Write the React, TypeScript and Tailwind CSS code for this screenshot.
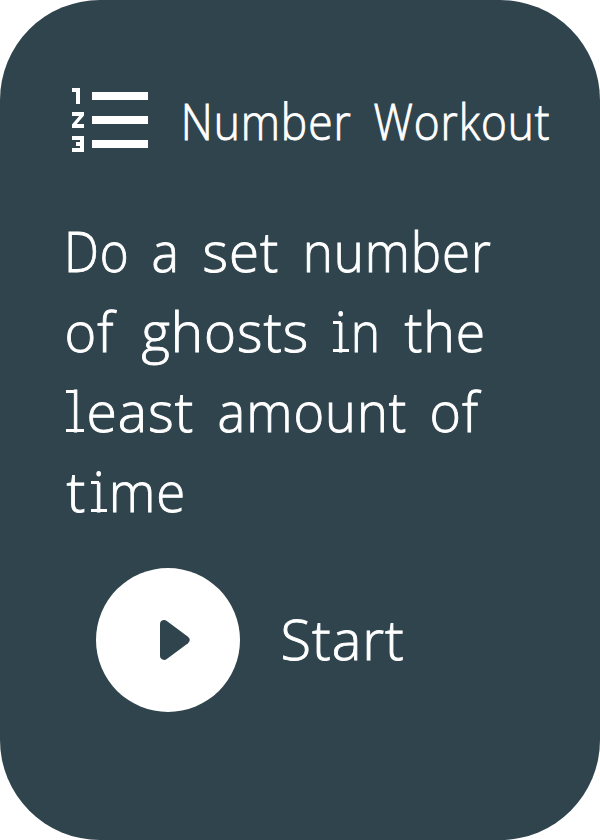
import { useLayoutEffect, useRef, useState } from "react";
import type { ReactNode } from "react";

type SegmentProps = {
  text: string;
  gap?: number;
  width: number;
  size?: number;
  children?: ReactNode;
};

const STROKE = 0.9;

// A run of letters whose ink is fitted to an exact width.
function Segment({ text, gap = 0, width, size = 56, children }: SegmentProps) {
  const ref = useRef<HTMLSpanElement>(null);
  const [transform, setTransform] = useState("none");

  useLayoutEffect(() => {
    const ctx = document.createElement("canvas").getContext("2d");
    if (!ctx || !ref.current) return;
    const style = getComputedStyle(ref.current);
    ctx.font = `${style.fontWeight} ${size}px "Open Sans"`;
    ctx.letterSpacing = style.letterSpacing;
    const m = ctx.measureText(text);
    const left = m.actualBoundingBoxLeft + STROKE / 2;
    const right = m.actualBoundingBoxRight + STROKE / 2;
    const scale = width / (left + right);
    setTransform(`translate(${left * scale}px, -2px) scaleX(${scale})`);
  }, [text, width, size]);

  return (
    <span className="relative block shrink-0 whitespace-pre" style={{ width, marginLeft: gap }}>
      <span
        ref={ref}
        className="block w-max origin-left tracking-[1px] [-webkit-text-stroke:0.9px_white]"
        style={{ transform, fontSize: size }}
      >
        {text}
      </span>
      {children}
    </span>
  );
}

function LetterI({ gap }: { gap: number }) {
  return (
    <Segment text="i" gap={gap} width={5.5}>
      <span className="absolute -left-[5.5px] top-[29px] h-[3px] w-[8px] bg-white" />
      <span className="absolute -left-[5.5px] top-[57px] h-[3px] w-[16.5px] bg-white" />
    </Segment>
  );
}

function LetterL({ gap }: { gap: number }) {
  return (
    <Segment text="l" gap={gap} width={4.5}>
      <span className="absolute -left-[6.5px] top-[17.5px] h-[3px] w-[8px] bg-white" />
      <span className="absolute -left-[6.5px] top-[57px] h-[3px] w-[18px] bg-white" />
    </Segment>
  );
}

export default function App() {
  return (
    <main className="h-[840px] w-[600px] overflow-hidden rounded-[100px] bg-[#30444d] pt-[72px] font-['Open_Sans',sans-serif] font-light text-white">
      <header className="flex h-24 items-start pl-16">
        <svg viewBox="0 0 24 24" className="size-24 shrink-0" fill="currentColor">
          <path d="M2 17h2v.5H3v1h1v.5H2v1h3v-4H2v1zm1-9h1V4H2v1h1v3zm-1 3h1.8L2 13.1v.9h3v-1H3.2L5 10.9V10H2v1zm5-6v2h14V5H7zm0 14h14v-2H7v2zm0-6h14v-2H7v2z" />
        </svg>
        <h1 className="mt-[11px] flex leading-[80px]">
          <Segment text="Number" gap={23.5} width={167} size={49} />
          <Segment text="Workout" gap={23.5} width={175.5} size={49} />
        </h1>
      </header>
      <section className="mt-[44px] leading-[80px]">
        <div className="flex h-20">
          <Segment text="Do" gap={68} width={58.5} />
          <Segment text="a" gap={26.5} width={23} />
          <Segment text="set" gap={28} width={74} />
          <Segment text="number" gap={27.5} width={184.5} />
        </div>
        <div className="flex h-20">
          <Segment text="of" gap={66.5} width={50} />
          <Segment text="ghosts" gap={24} width={165.5} />
          <LetterI gap={32} />
          <Segment text="n" gap={10.5} width={23} />
          <Segment text="the" gap={26.5} width={79} />
        </div>
        <div className="flex h-20">
          <LetterL gap={72.5} />
          <Segment text="east" gap={11.5} width={104} />
          <Segment text="amount" gap={26} width={187} />
          <Segment text="of" gap={26} width={49.5} />
        </div>
        <div className="flex h-20">
          <Segment text="t" gap={66} width={19} />
          <LetterI gap={11} />
          <Segment text="me" gap={10.5} width={71} />
        </div>
      </section>
      <section className="mt-[36px] flex items-start">
        <button className="ml-24 flex size-36 items-center rounded-full bg-white pl-16" aria-label="Start">
          <svg viewBox="0 0 30 40" className="h-10 w-[30px]" fill="#30444d">
            <path d="M0 4C0 .6 4 -1 6.8 1L28 16.8Q31.5 20 28 23.2L6.8 39C4 41 0 39.4 0 36Z" />
          </svg>
        </button>
        <div className="mt-[32px] leading-[80px]">
          <Segment text="Start" gap={43} width={120.5} />
        </div>
      </section>
    </main>
  );
}
